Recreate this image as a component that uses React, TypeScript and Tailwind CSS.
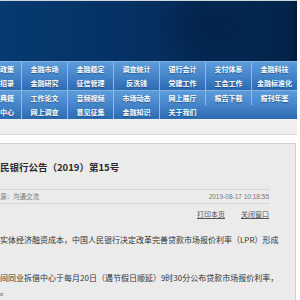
const navBlocks = [
  [
    ['政策', '金融市场', '金融稳定', '调查统计', '银行会计', '支付体系', '金融科技'],
    ['招录', '金融研究', '征信管理', '反洗钱', '党建工作', '工会工作', '金融标准化'],
  ],
  [
    ['典籍', '工作论文', '音频视频', '市场动态', '网上展厅', '报告下载', '报刊年鉴'],
    ['中心', '网上调查', '意见征集', '金融知识', '关于我们', '', ''],
  ],
];

function NavBlock({ rows }: { rows: string[][] }) {
  return (
    <div className="grid grid-cols-[21px_repeat(6,46px)] bg-gradient-to-b from-[#5c9cda] via-[#4585c9] to-[#2c6bb1] border-t border-[#7fb2e3]">
      {rows.map((row, r) =>
        row.map((item, i) =>
          i === 0 ? (
            <div
              key={`${r}-${i}`}
              className="h-[14px] flex items-center justify-start whitespace-nowrap text-[7px] leading-none font-bold text-white [text-shadow:0_1px_1px_rgba(10,50,100,0.6)]"
            >
              {item}
            </div>
          ) : (
            <div
              key={`${r}-${i}`}
              className={`h-[14px] flex items-center justify-center whitespace-nowrap text-[7px] leading-none font-bold text-white [text-shadow:0_1px_1px_rgba(10,50,100,0.6)] ${
                item ? 'border-l border-[#8dbbe7]' : ''
              }`}
            >
              {item}
            </div>
          )
        )
      )}
    </div>
  );
}

export default function App() {
  return (
    <div className="w-[300px] h-[300px] overflow-hidden bg-white font-['Noto_Sans_CJK_SC','Noto_Sans',sans-serif]">
      <div className="w-[297px]">
        {/* banner */}
        <div className="h-px bg-[#cfd6de]" />
        <div className="relative h-[60px] bg-gradient-to-r from-[#063a72] via-[#053061] to-[#022348] overflow-hidden">
          <div className="absolute left-[150px] top-[-30px] w-[110px] h-[110px] rounded-full bg-[radial-gradient(circle,rgba(0,20,50,0.35),rgba(0,20,50,0)_70%)]" />
          <div className="absolute right-0 top-0 w-[6px] h-full bg-gradient-to-r from-transparent to-[#011a38]" />
        </div>

        {/* nav */}
        <div>
          {navBlocks.map((rows, b) => (
            <NavBlock key={b} rows={rows} />
          ))}
        </div>

        <div className="h-[16px] bg-[#efefef] border-b border-[#dcdcdc]" />
        <div className="h-[8px] bg-white" />
      </div>

      {/* article box */}
      <div className="w-[296px] h-[200px] border-t border-r border-[#d0d0d0] bg-[#ebebeb] pr-[25px] text-[#333]">
        <div className="mt-[17px] h-[14px] flex items-center whitespace-nowrap">
          <span className="text-[9.5px] font-bold leading-none text-[#2b2b2b]">
            民银行公告（2019）第15号
          </span>
        </div>

        <div className="mt-[14px] border-t border-b border-[#d6d6d6] h-[15px] flex items-center justify-between text-[6.5px] text-[#777]">
          <span className="whitespace-nowrap">源：沟通交流</span>
          <span className="font-['Liberation_Sans',sans-serif] pr-px">2019-08-17 10:18:55</span>
        </div>

        <div className="mt-[4px] h-[12px] flex items-center justify-end gap-[16px] text-[7px] text-[#555] pr-px">
          <a className="underline underline-offset-1 cursor-pointer">打印本页</a>
          <a className="underline underline-offset-1 cursor-pointer">关闭窗口</a>
        </div>

        <div className="mt-[13px] text-[8px] leading-[14px] whitespace-nowrap">
          <p className="h-[14px]">实体经济融资成本，中国人民银行决定改革完善贷款市场报价利率（LPR）形成</p>
          <p className="h-[14px]" />
          <p className="mt-[10px] h-[14px]">间同业拆借中心于每月20日（遇节假日顺延）9时30分公布贷款市场报价利率，</p>
          <p className="h-[14px]">。</p>
        </div>
      </div>
    </div>
  );
}
